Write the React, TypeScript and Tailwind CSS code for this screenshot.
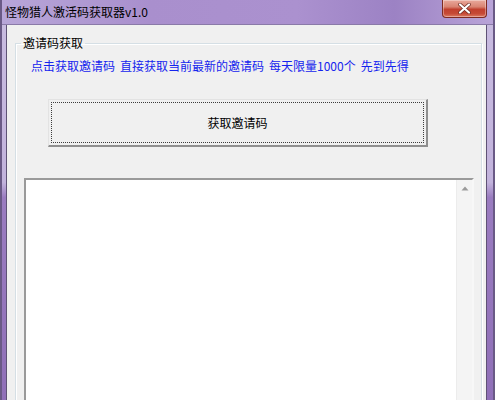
import React from 'react'

const FONT = "font-['Noto_Sans_CJK_SC','Liberation_Sans',sans-serif]"

const CloseButton: React.FC = () => (
  <button
    className="mr-[6px] self-start w-[45px] h-[18px] flex items-center justify-center rounded-b-[4px] border border-t-0 border-[#7e2b22] bg-[linear-gradient(to_bottom,#e9a99c_0%,#d98472_40%,#c1402e_55%,#c64a36_80%,#dc7a63_100%)] shadow-[inset_0_0_0_1px_rgba(255,255,255,0.35)]"
    aria-label="关闭"
  >
    <svg width="13" height="11" viewBox="0 0 13 11">
      <path d="M2 1.5 L11 9.5 M11 1.5 L2 9.5" stroke="#6b2a22" strokeWidth="3.6" strokeLinecap="round" />
      <path d="M2 1.5 L11 9.5 M11 1.5 L2 9.5" stroke="#ffffff" strokeWidth="2.2" strokeLinecap="round" />
    </svg>
  </button>
)

const FrameStrip: React.FC<{ w: string }> = ({ w }) => (
  <div
    className={`${w} shrink-0 bg-[linear-gradient(to_bottom,#c8bbe0_0%,#c2b3dc_42%,#9a7cc0_46%,#9070b8_100%)]`}
  />
)

export default function App() {
  return (
    <div className={`${FONT} w-[495px] h-[400px] overflow-hidden flex flex-col border-x-2 border-[#6a5a86] bg-[#b49fd6]`}>
      {/* title bar */}
      <div className="h-[25px] shrink-0 flex items-start justify-between border-b border-[#8a7aa8] bg-[linear-gradient(to_right,#b8a6d8_0%,#a98fcd_30%,#ab91cf_60%,#9c82c4_80%,#b9a4d8_100%)]">
        <span className="pl-[3px] pt-[4px] text-[12px] leading-[16px] text-black">怪物猎人激活码获取器v1.0</span>
        <CloseButton />
      </div>

      <div className="flex flex-1 min-h-0">
        <FrameStrip w="w-[4px]" />

        {/* client area */}
        <div className="flex-1 min-w-0 flex flex-col border-x border-[#5e5275] bg-[#f0f0f0]">
          <fieldset className="mt-[10px] ml-[8px] mr-[4px] h-[400px] border border-[#d5dfe5] shadow-[inset_1px_1px_0_#ffffff,1px_1px_0_#ffffff] p-0 min-w-0">
            <legend className="ml-[5px] px-[2px] text-[12px] leading-[16px] text-black">邀请码获取</legend>

            <div className="mt-[7px] pl-[15px] flex gap-[5px] text-[12px] leading-[16px] text-[#1524ee] whitespace-nowrap">
              <span>点击获取邀请码</span>
              <span>直接获取当前最新的邀请码</span>
              <span>每天限量1000个</span>
              <span>先到先得</span>
            </div>

            <button className="mt-[25px] ml-[32px] w-[380px] h-[48px] flex items-center justify-center border-t border-l border-[#e3e3e3] border-r-2 border-b-2 border-r-[#8f8f8f] border-b-[#8f8f8f] bg-[#f0f0f0] p-[2px]">
              <span className="w-full h-full flex items-center justify-center border border-dotted border-[#3c3c3c] text-[12px] leading-[16px] text-black">
                获取邀请码
              </span>
            </button>

            {/* output box */}
            <div className="mt-[31px] ml-[8px] mr-[7px] h-[260px] flex border-2 border-t-[#9a9a9a] border-l-[#9a9a9a] border-r-[#f7f7f7] border-b-[#f7f7f7] bg-white">
              <div className="flex-1" />
              <div className="w-[16px] flex flex-col items-center border-l border-[#ececec] bg-[#f4f4f4]">
                <svg className="mt-[6px]" width="8" height="5" viewBox="0 0 8 5">
                  <path d="M4 0.5 L7.5 4.5 L0.5 4.5 Z" fill="#9b9b9b" />
                </svg>
              </div>
            </div>
          </fieldset>
        </div>

        <FrameStrip w="w-[6px]" />
      </div>
    </div>
  )
}
